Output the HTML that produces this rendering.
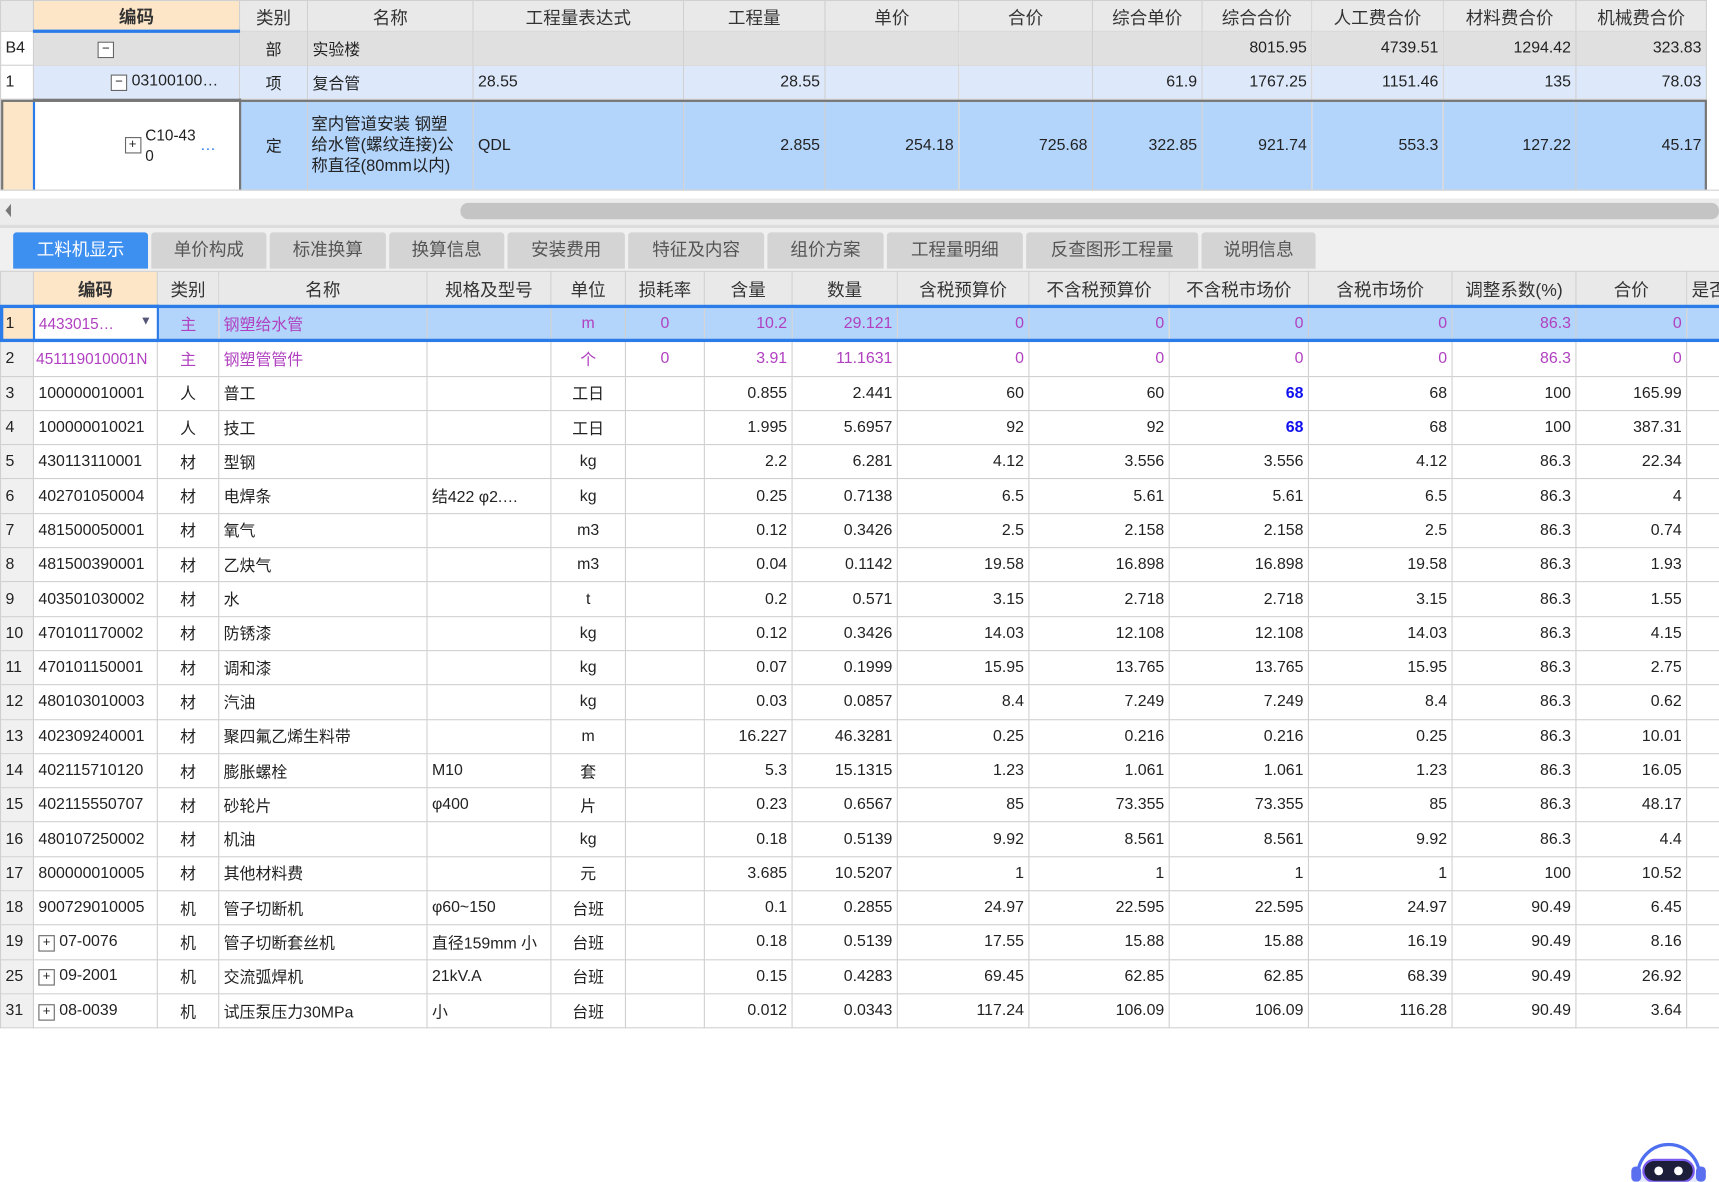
<!DOCTYPE html>
<html><head><meta charset="utf-8"><style>
html,body{margin:0;padding:0;background:#fff;}
body{width:1719px;height:1182px;overflow:hidden;position:relative;}
#w{position:absolute;left:0;top:0;width:1568px;height:1078px;transform:scale(1.0963);transform-origin:0 0;font-family:"Liberation Sans","Noto Sans CJK SC",sans-serif;font-size:14.5px;color:#222;}
table{border-collapse:collapse;table-layout:fixed;position:absolute;left:0;}
td,th{border:1px solid #d0d0d0;padding:0 4px;white-space:nowrap;overflow:hidden;font-weight:normal;}
th{background:#e9e9e9;font-size:16px;color:#333;}
.r{text-align:right;}.c{text-align:center;}
.rn{background:#f0f0f0;text-align:left;padding-left:4px;color:#222;}
.p{color:#b040c0;}
.b{color:#1010ee;font-weight:bold;}
#top tr.h th{height:26px;}
#bot th{height:30px;}
#bot td{height:30.3px;}
.tab{position:absolute;top:212px;height:33px;background:#d4d4d4;color:#555;font-size:16px;text-align:center;line-height:33px;border-radius:3px 3px 0 0;}
</style></head><body><div id="w">
<table id="top" style="top:0;width:1556px">
<colgroup><col style="width:30px"><col style="width:188px"><col style="width:62px"><col style="width:151px"><col style="width:192px"><col style="width:129px"><col style="width:122px"><col style="width:122px"><col style="width:100px"><col style="width:100px"><col style="width:120px"><col style="width:121px"><col style="width:119px"></colgroup>
<tr class="h"><th></th><th style="background:#fde6c8;font-weight:bold;border-bottom:3px solid #2b7be8">编码</th><th>类别</th><th>名称</th><th>工程量表达式</th><th>工程量</th><th>单价</th><th>合价</th><th>综合单价</th><th>综合合价</th><th>人工费合价</th><th>材料费合价</th><th>机械费合价</th></tr>
<tr style="background:#e0e0e0;height:31px"><td class="rn" style="background:#fff">B4</td><td style="padding-left:58px"><span style="display:inline-block;width:13px;height:13px;border:1px solid #666;line-height:11px;text-align:center;font-size:12px;background:#fff">−</span></td><td class="c">部</td><td>实验楼</td><td></td><td></td><td></td><td></td><td></td><td class="r">8015.95</td><td class="r">4739.51</td><td class="r">1294.42</td><td class="r">323.83</td></tr>
<tr style="background:#dde9fb;height:31px"><td class="rn" style="background:#fff">1</td><td style="padding-left:70px"><span style="display:inline-block;width:13px;height:13px;border:1px solid #666;line-height:11px;text-align:center;font-size:12px;background:#fff">−</span> 03100100…</td><td class="c">项</td><td>复合管</td><td>28.55</td><td class="r">28.55</td><td></td><td></td><td class="r">61.9</td><td class="r">1767.25</td><td class="r">1151.46</td><td class="r">135</td><td class="r">78.03</td></tr>
<tr style="background:#b3d4fb;height:84px;outline:2px solid #777;outline-offset:-2px"><td class="rn" style="background:#fde6c8"></td><td style="background:#fff;padding-left:82px;border:2px solid #777;border-left:2px solid #2b7be8"><span style="display:inline-block;width:13px;height:13px;border:1px solid #666;line-height:11px;text-align:center;font-size:12px;vertical-align:middle">+</span> <span style="display:inline-block;vertical-align:middle;font-size:14px;line-height:19px">C10-43<br>0</span> <span style="color:#2b7be8">…</span></td><td class="c">定</td><td style="white-space:normal;line-height:19px;font-size:15px;padding:0 12px 0 3px">室内管道安装 钢塑给水管(螺纹连接)公称直径(80mm以内)</td><td>QDL</td><td class="r">2.855</td><td class="r">254.18</td><td class="r">725.68</td><td class="r">322.85</td><td class="r">921.74</td><td class="r">553.3</td><td class="r">127.22</td><td class="r">45.17</td></tr>
</table>
<div style="position:absolute;left:0;top:173px;width:1568px;height:8px;background:#fff;border-top:1px solid #d0d0d0"></div>
<div style="position:absolute;left:0;top:181px;width:1568px;height:24px;background:#ececec"></div>
<div style="position:absolute;left:420px;top:185px;width:1148px;height:15px;background:#c4c4c4;border-radius:7px"></div>
<div style="position:absolute;left:5px;top:186px;width:0;height:0;border-top:6px solid transparent;border-bottom:6px solid transparent;border-right:5px solid #777"></div>
<div style="position:absolute;left:0;top:205px;width:1568px;height:42px;background:#f0f0f0;border-top:3px solid #ddd"></div>
<div class="tab" style="left:12px;width:123px;background:#3d8ff0;color:#fff">工料机显示</div>
<div class="tab" style="left:138px;width:105px">单价构成</div>
<div class="tab" style="left:246px;width:106px">标准换算</div>
<div class="tab" style="left:355px;width:105px">换算信息</div>
<div class="tab" style="left:463px;width:107px">安装费用</div>
<div class="tab" style="left:573px;width:124px">特征及内容</div>
<div class="tab" style="left:700px;width:106px">组价方案</div>
<div class="tab" style="left:809px;width:124px">工程量明细</div>
<div class="tab" style="left:936px;width:157px">反查图形工程量</div>
<div class="tab" style="left:1096px;width:104px">说明信息</div>
<table id="bot" style="top:247px;width:1590px">
<colgroup><col style="width:30px"><col style="width:113px"><col style="width:56px"><col style="width:190px"><col style="width:113px"><col style="width:68px"><col style="width:72px"><col style="width:80px"><col style="width:96px"><col style="width:120px"><col style="width:128px"><col style="width:127px"><col style="width:131px"><col style="width:113px"><col style="width:101px"><col style="width:52px"></colgroup>
<tr><th></th><th style="background:#fde6c8;font-weight:bold">编码</th><th>类别</th><th>名称</th><th>规格及型号</th><th>单位</th><th>损耗率</th><th>含量</th><th>数量</th><th>含税预算价</th><th>不含税预算价</th><th>不含税市场价</th><th>含税市场价</th><th>调整系数(%)</th><th>合价</th><th style="text-align:left">是否</th></tr>
<tr class="p" style="background:#b3d4fb;outline:3px solid #2b7be8;outline-offset:-2px"><td class="rn" style="background:#fde6c8;color:#222">1</td><td style="background:#fff;border:2px solid #2b7be8;font-size:14px">4433015… <span style="float:right;color:#557;font-size:11px">▼</span></td><td class="c">主</td><td>钢塑给水管</td><td></td><td class="c">m</td><td class="c">0</td><td class="r">10.2</td><td class="r">29.121</td><td class="r">0</td><td class="r">0</td><td class="r">0</td><td class="r">0</td><td class="r">86.3</td><td class="r">0</td><td></td></tr>
<tr class="p"><td class="rn" style="color:#222">2</td><td style="font-size:14px;padding:0 2px">451119010001N</td><td class="c">主</td><td>钢塑管管件</td><td></td><td class="c">个</td><td class="c">0</td><td class="r">3.91</td><td class="r">11.1631</td><td class="r">0</td><td class="r">0</td><td class="r">0</td><td class="r">0</td><td class="r">86.3</td><td class="r">0</td><td></td></tr>
<tr><td class="rn">3</td><td>100000010001</td><td class="c">人</td><td>普工</td><td></td><td class="c">工日</td><td></td><td class="r">0.855</td><td class="r">2.441</td><td class="r">60</td><td class="r">60</td><td class="r b">68</td><td class="r">68</td><td class="r">100</td><td class="r">165.99</td><td></td></tr>
<tr><td class="rn">4</td><td>100000010021</td><td class="c">人</td><td>技工</td><td></td><td class="c">工日</td><td></td><td class="r">1.995</td><td class="r">5.6957</td><td class="r">92</td><td class="r">92</td><td class="r b">68</td><td class="r">68</td><td class="r">100</td><td class="r">387.31</td><td></td></tr>
<tr><td class="rn">5</td><td>430113110001</td><td class="c">材</td><td>型钢</td><td></td><td class="c">kg</td><td></td><td class="r">2.2</td><td class="r">6.281</td><td class="r">4.12</td><td class="r">3.556</td><td class="r">3.556</td><td class="r">4.12</td><td class="r">86.3</td><td class="r">22.34</td><td></td></tr>
<tr><td class="rn">6</td><td>402701050004</td><td class="c">材</td><td>电焊条</td><td>结422 φ2.…</td><td class="c">kg</td><td></td><td class="r">0.25</td><td class="r">0.7138</td><td class="r">6.5</td><td class="r">5.61</td><td class="r">5.61</td><td class="r">6.5</td><td class="r">86.3</td><td class="r">4</td><td></td></tr>
<tr><td class="rn">7</td><td>481500050001</td><td class="c">材</td><td>氧气</td><td></td><td class="c">m3</td><td></td><td class="r">0.12</td><td class="r">0.3426</td><td class="r">2.5</td><td class="r">2.158</td><td class="r">2.158</td><td class="r">2.5</td><td class="r">86.3</td><td class="r">0.74</td><td></td></tr>
<tr><td class="rn">8</td><td>481500390001</td><td class="c">材</td><td>乙炔气</td><td></td><td class="c">m3</td><td></td><td class="r">0.04</td><td class="r">0.1142</td><td class="r">19.58</td><td class="r">16.898</td><td class="r">16.898</td><td class="r">19.58</td><td class="r">86.3</td><td class="r">1.93</td><td></td></tr>
<tr><td class="rn">9</td><td>403501030002</td><td class="c">材</td><td>水</td><td></td><td class="c">t</td><td></td><td class="r">0.2</td><td class="r">0.571</td><td class="r">3.15</td><td class="r">2.718</td><td class="r">2.718</td><td class="r">3.15</td><td class="r">86.3</td><td class="r">1.55</td><td></td></tr>
<tr><td class="rn">10</td><td>470101170002</td><td class="c">材</td><td>防锈漆</td><td></td><td class="c">kg</td><td></td><td class="r">0.12</td><td class="r">0.3426</td><td class="r">14.03</td><td class="r">12.108</td><td class="r">12.108</td><td class="r">14.03</td><td class="r">86.3</td><td class="r">4.15</td><td></td></tr>
<tr><td class="rn">11</td><td>470101150001</td><td class="c">材</td><td>调和漆</td><td></td><td class="c">kg</td><td></td><td class="r">0.07</td><td class="r">0.1999</td><td class="r">15.95</td><td class="r">13.765</td><td class="r">13.765</td><td class="r">15.95</td><td class="r">86.3</td><td class="r">2.75</td><td></td></tr>
<tr><td class="rn">12</td><td>480103010003</td><td class="c">材</td><td>汽油</td><td></td><td class="c">kg</td><td></td><td class="r">0.03</td><td class="r">0.0857</td><td class="r">8.4</td><td class="r">7.249</td><td class="r">7.249</td><td class="r">8.4</td><td class="r">86.3</td><td class="r">0.62</td><td></td></tr>
<tr><td class="rn">13</td><td>402309240001</td><td class="c">材</td><td>聚四氟乙烯生料带</td><td></td><td class="c">m</td><td></td><td class="r">16.227</td><td class="r">46.3281</td><td class="r">0.25</td><td class="r">0.216</td><td class="r">0.216</td><td class="r">0.25</td><td class="r">86.3</td><td class="r">10.01</td><td></td></tr>
<tr><td class="rn">14</td><td>402115710120</td><td class="c">材</td><td>膨胀螺栓</td><td>M10</td><td class="c">套</td><td></td><td class="r">5.3</td><td class="r">15.1315</td><td class="r">1.23</td><td class="r">1.061</td><td class="r">1.061</td><td class="r">1.23</td><td class="r">86.3</td><td class="r">16.05</td><td></td></tr>
<tr><td class="rn">15</td><td>402115550707</td><td class="c">材</td><td>砂轮片</td><td>φ400</td><td class="c">片</td><td></td><td class="r">0.23</td><td class="r">0.6567</td><td class="r">85</td><td class="r">73.355</td><td class="r">73.355</td><td class="r">85</td><td class="r">86.3</td><td class="r">48.17</td><td></td></tr>
<tr><td class="rn">16</td><td>480107250002</td><td class="c">材</td><td>机油</td><td></td><td class="c">kg</td><td></td><td class="r">0.18</td><td class="r">0.5139</td><td class="r">9.92</td><td class="r">8.561</td><td class="r">8.561</td><td class="r">9.92</td><td class="r">86.3</td><td class="r">4.4</td><td></td></tr>
<tr><td class="rn">17</td><td>800000010005</td><td class="c">材</td><td>其他材料费</td><td></td><td class="c">元</td><td></td><td class="r">3.685</td><td class="r">10.5207</td><td class="r">1</td><td class="r">1</td><td class="r">1</td><td class="r">1</td><td class="r">100</td><td class="r">10.52</td><td></td></tr>
<tr><td class="rn">18</td><td>900729010005</td><td class="c">机</td><td>管子切断机</td><td>φ60~150</td><td class="c">台班</td><td></td><td class="r">0.1</td><td class="r">0.2855</td><td class="r">24.97</td><td class="r">22.595</td><td class="r">22.595</td><td class="r">24.97</td><td class="r">90.49</td><td class="r">6.45</td><td></td></tr>
<tr><td class="rn">19</td><td><span style="display:inline-block;width:13px;height:13px;border:1px solid #666;line-height:11px;text-align:center;font-size:12px">+</span> 07-0076</td><td class="c">机</td><td>管子切断套丝机</td><td>直径159mm 小</td><td class="c">台班</td><td></td><td class="r">0.18</td><td class="r">0.5139</td><td class="r">17.55</td><td class="r">15.88</td><td class="r">15.88</td><td class="r">16.19</td><td class="r">90.49</td><td class="r">8.16</td><td></td></tr>
<tr><td class="rn">25</td><td><span style="display:inline-block;width:13px;height:13px;border:1px solid #666;line-height:11px;text-align:center;font-size:12px">+</span> 09-2001</td><td class="c">机</td><td>交流弧焊机</td><td>21kV.A</td><td class="c">台班</td><td></td><td class="r">0.15</td><td class="r">0.4283</td><td class="r">69.45</td><td class="r">62.85</td><td class="r">62.85</td><td class="r">68.39</td><td class="r">90.49</td><td class="r">26.92</td><td></td></tr>
<tr><td class="rn">31</td><td><span style="display:inline-block;width:13px;height:13px;border:1px solid #666;line-height:11px;text-align:center;font-size:12px">+</span> 08-0039</td><td class="c">机</td><td>试压泵压力30MPa</td><td>小</td><td class="c">台班</td><td></td><td class="r">0.012</td><td class="r">0.0343</td><td class="r">117.24</td><td class="r">106.09</td><td class="r">106.09</td><td class="r">116.28</td><td class="r">90.49</td><td class="r">3.64</td><td></td></tr>
</table>
<svg style="position:absolute;left:1484px;top:1032px" width="76" height="46" viewBox="0 0 76 46">
<path d="M10 40 A28 28 0 0 1 66 40" fill="none" stroke="#4d6ff0" stroke-width="3"/>
<ellipse cx="38" cy="44" rx="26" ry="18" fill="#e4e8fb"/>
<rect x="15" y="26" width="46" height="20" rx="10" fill="#1c1e3a" stroke="#7a5cf0" stroke-width="2"/>
<ellipse cx="29" cy="36" rx="4" ry="4" fill="#fff"/><ellipse cx="47" cy="36" rx="4" ry="4" fill="#fff"/>
<rect x="4" y="32" width="9" height="14" rx="4" fill="#5a6ef0"/><rect x="63" y="32" width="9" height="14" rx="4" fill="#5a6ef0"/>
</svg>
</div></body></html>
